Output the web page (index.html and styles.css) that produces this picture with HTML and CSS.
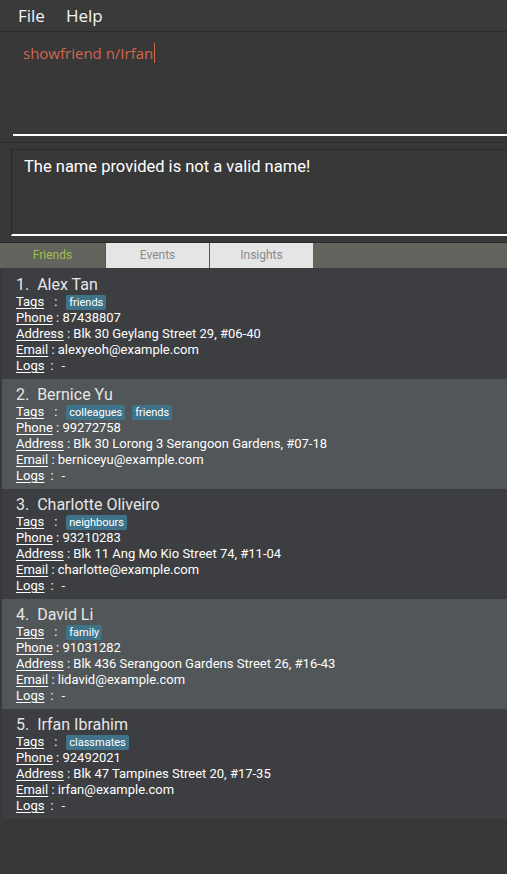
FILE: index.html
```html
<!DOCTYPE html>
<html>
<head>
<meta charset="utf-8">
<link rel="stylesheet" href="styles.css">
</head>
<body>
<div class="app">
  <div class="menubar">
    <span class="menu">File</span>
    <span class="menu">Help</span>
  </div>
  <div class="command">
    <div class="cmd-field"><span class="cmd-text">showfriend n/Irfan</span><span class="caret"></span></div>
  </div>
  <div class="result-pane">
    <div class="result-box">The name provided is not a valid name!</div>
  </div>
  <div class="tabs">
    <div class="tab active">Friends</div>
    <div class="tab">Events</div>
    <div class="tab">Insights</div>
  </div>
  <div class="list">
    <div class="card odd">
      <div class="name">1.&nbsp; Alex Tan</div>
      <div class="line"><u>Tags</u><span class="sep-tags">:</span><span class="tag">friends</span></div>
      <div class="line"><u>Phone</u> : 87438807</div>
      <div class="line"><u>Address</u> : Blk 30 Geylang Street 29, #06-40</div>
      <div class="line"><u>Email</u> : alexyeoh@example.com</div>
      <div class="line"><u>Logs</u><span class="sep-logs">:</span>-</div>
    </div>
    <div class="card even">
      <div class="name">2.&nbsp; Bernice Yu</div>
      <div class="line"><u>Tags</u><span class="sep-tags">:</span><span class="tag">colleagues</span><span class="tag">friends</span></div>
      <div class="line"><u>Phone</u> : 99272758</div>
      <div class="line"><u>Address</u> : Blk 30 Lorong 3 Serangoon Gardens, #07-18</div>
      <div class="line"><u>Email</u> : berniceyu@example.com</div>
      <div class="line"><u>Logs</u><span class="sep-logs">:</span>-</div>
    </div>
    <div class="card odd">
      <div class="name">3.&nbsp; Charlotte Oliveiro</div>
      <div class="line"><u>Tags</u><span class="sep-tags">:</span><span class="tag">neighbours</span></div>
      <div class="line"><u>Phone</u> : 93210283</div>
      <div class="line"><u>Address</u> : Blk 11 Ang Mo Kio Street 74, #11-04</div>
      <div class="line"><u>Email</u> : charlotte@example.com</div>
      <div class="line"><u>Logs</u><span class="sep-logs">:</span>-</div>
    </div>
    <div class="card even">
      <div class="name">4.&nbsp; David Li</div>
      <div class="line"><u>Tags</u><span class="sep-tags">:</span><span class="tag">family</span></div>
      <div class="line"><u>Phone</u> : 91031282</div>
      <div class="line"><u>Address</u> : Blk 436 Serangoon Gardens Street 26, #16-43</div>
      <div class="line"><u>Email</u> : lidavid@example.com</div>
      <div class="line"><u>Logs</u><span class="sep-logs">:</span>-</div>
    </div>
    <div class="card odd">
      <div class="name">5.&nbsp; Irfan Ibrahim</div>
      <div class="line"><u>Tags</u><span class="sep-tags">:</span><span class="tag">classmates</span></div>
      <div class="line"><u>Phone</u> : 92492021</div>
      <div class="line"><u>Address</u> : Blk 47 Tampines Street 20, #17-35</div>
      <div class="line"><u>Email</u> : irfan@example.com</div>
      <div class="line"><u>Logs</u><span class="sep-logs">:</span>-</div>
    </div>
  </div>
</div>
</body>
</html>
```
FILE: styles.css
```css
html, body {
  margin: 0;
  padding: 0;
  background: #383838;
  height: 100%;
}
body {
  font-family: Roboto, "Noto Sans", sans-serif;
  color: #fff;
}
.app {
  width: 507px;
  height: 874px;
  background: #383838;
  display: flex;
  flex-direction: column;
}
.menubar {
  height: 31px;
  border-bottom: 1px solid #2b2b2b;
  display: flex;
  align-items: center;
  gap: 21px;
  padding-left: 18px;
  box-sizing: content-box;
  background: #3a3a3a;
}
.menu {
  font-family: "Open Sans", sans-serif;
  font-size: 17px;
  color: #f4f4f4;
}
.command {
  height: 111px;
  border-bottom: 1px solid #2b2b2b;
  padding-left: 13px;
  box-sizing: border-box;
}
.cmd-field {
  height: 104px;
  border-bottom: 2px solid #fff;
  padding: 11px 0 0 10px;
  box-sizing: border-box;
  display: flex;
  align-items: flex-start;
}
.cmd-text {
  font-family: "Open Sans", sans-serif;
  font-size: 15px;
  color: #d0674c;
  line-height: 20px;
}
.caret {
  width: 1px;
  height: 20px;
  background: #d0674c;
  margin-left: 1px;
}
.result-pane {
  padding: 6px 0 6px 11px;
  border-bottom: 1px solid #2b2b2b;
}
.result-box {
  height: 87px;
  border: 1px solid #2a2a2a;
  border-right: none;
  box-sizing: border-box;
  border-bottom: 2px solid #fff;
  padding: 6px 0 0 12px;
  font-size: 16.5px;
  line-height: 22px;
  color: #fff;
  background: #383838;
}
.tabs {
  height: 25px;
  background: #64645e;
  display: flex;
  border-bottom: 1px solid #3a3a3a;
}
.tab {
  width: 103px;
  text-align: center;
  font-size: 12px;
  line-height: 25px;
  color: #8a8a8a;
  background: #e5e5e5;
  border-left: 1px solid #555;
}
.tab.active {
  width: 105px;
  background: #64645e;
  color: #9fbf4f;
  border-left: none;
}
.list {
  margin-left: 2px;
  display: flex;
  flex-direction: column;
}
.card {
  height: 110px;
  padding: 7px 0 0 14px;
  box-sizing: border-box;
  font-size: 13px;
  line-height: 16px;
  color: #fff;
}
.card.odd { background: #3c3e41; }
.card.even { background: #515658; }
.name {
  font-size: 16px;
  line-height: 18px;
  height: 18px;
  color: #e6e6e6;
}
.line {
  height: 16px;
  display: flex;
  align-items: center;
  white-space: pre;
}
.line u {
  text-underline-offset: 2px;
}
.sep-tags {
  margin: 0 9px 0 10px;
}
.sep-logs {
  margin: 0 8px 0 6px;
}
.tag {
  background: #3f7389;
  color: #fff;
  font-size: 11px;
  line-height: 15px;
  padding: 0 3px;
  border-radius: 2px;
  margin-right: 7px;
}
```
